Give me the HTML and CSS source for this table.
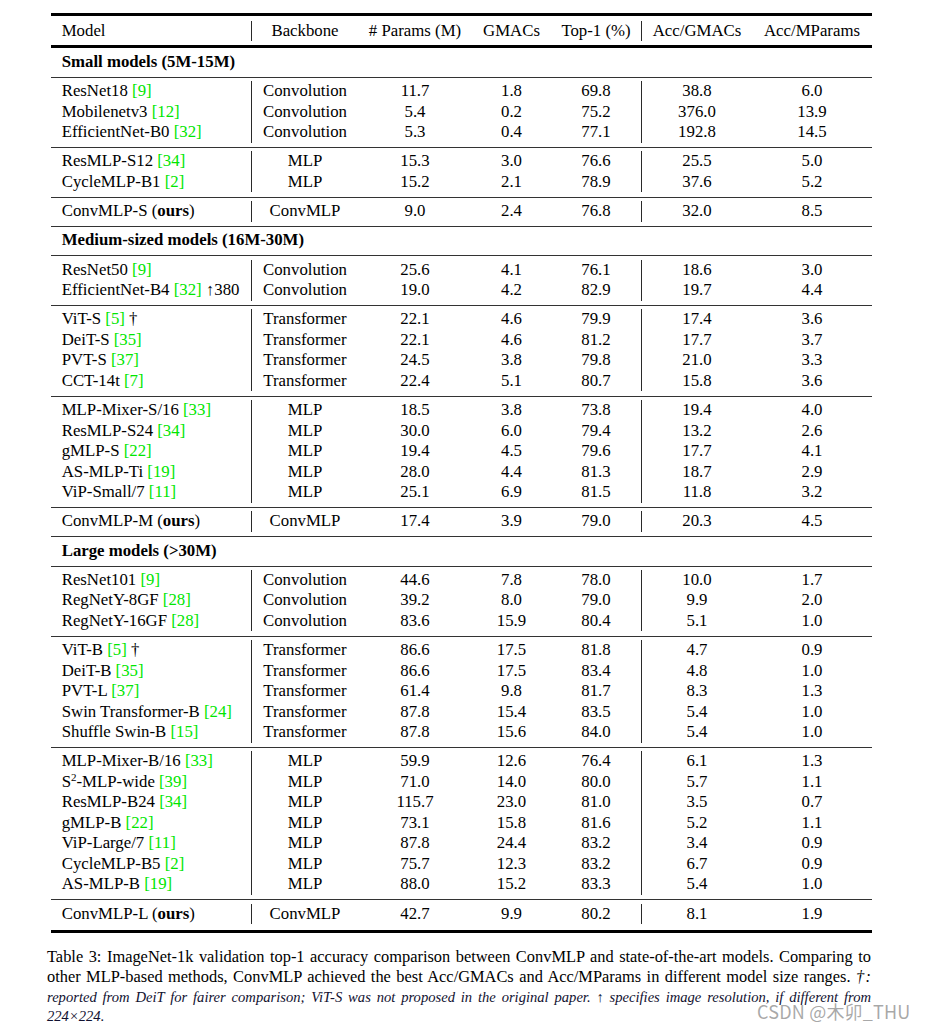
FILE: index.html
```html
<!DOCTYPE html>
<html>
<head>
<meta charset="utf-8">
<link rel="stylesheet" href="styles.css">
</head>
<body>
<div class="page">
  <div class="tbl">
    <div class="head row">
      <span class="m">Model</span><span>Backbone</span><span># Params (M)</span><span>GMACs</span><span class="t">Top-1 (%)</span><span>Acc/GMACs</span><span>Acc/MParams</span>
    </div>

    <div class="sec first">Small models (5M-15M)</div>
    <div class="grp">
      <div class="row"><span class="m">ResNet18 <a class="ref">[9]</a></span><span>Convolution</span><span>11.7</span><span>1.8</span><span class="t">69.8</span><span>38.8</span><span>6.0</span></div>
      <div class="row"><span class="m">Mobilenetv3 <a class="ref">[12]</a></span><span>Convolution</span><span>5.4</span><span>0.2</span><span class="t">75.2</span><span>376.0</span><span>13.9</span></div>
      <div class="row"><span class="m">EfficientNet-B0 <a class="ref">[32]</a></span><span>Convolution</span><span>5.3</span><span>0.4</span><span class="t">77.1</span><span>192.8</span><span>14.5</span></div>
    </div>
    <div class="grp">
      <div class="row"><span class="m">ResMLP-S12 <a class="ref">[34]</a></span><span>MLP</span><span>15.3</span><span>3.0</span><span class="t">76.6</span><span>25.5</span><span>5.0</span></div>
      <div class="row"><span class="m">CycleMLP-B1 <a class="ref">[2]</a></span><span>MLP</span><span>15.2</span><span>2.1</span><span class="t">78.9</span><span>37.6</span><span>5.2</span></div>
    </div>
    <div class="grp">
      <div class="row"><span class="m">ConvMLP-S (<b>ours</b>)</span><span>ConvMLP</span><span>9.0</span><span>2.4</span><span class="t">76.8</span><span>32.0</span><span>8.5</span></div>
    </div>

    <div class="sec">Medium-sized models (16M-30M)</div>
    <div class="grp">
      <div class="row"><span class="m">ResNet50 <a class="ref">[9]</a></span><span>Convolution</span><span>25.6</span><span>4.1</span><span class="t">76.1</span><span>18.6</span><span>3.0</span></div>
      <div class="row"><span class="m">EfficientNet-B4 <a class="ref">[32]</a> ↑380</span><span>Convolution</span><span>19.0</span><span>4.2</span><span class="t">82.9</span><span>19.7</span><span>4.4</span></div>
    </div>
    <div class="grp">
      <div class="row"><span class="m">ViT-S <a class="ref">[5]</a> †</span><span>Transformer</span><span>22.1</span><span>4.6</span><span class="t">79.9</span><span>17.4</span><span>3.6</span></div>
      <div class="row"><span class="m">DeiT-S <a class="ref">[35]</a></span><span>Transformer</span><span>22.1</span><span>4.6</span><span class="t">81.2</span><span>17.7</span><span>3.7</span></div>
      <div class="row"><span class="m">PVT-S <a class="ref">[37]</a></span><span>Transformer</span><span>24.5</span><span>3.8</span><span class="t">79.8</span><span>21.0</span><span>3.3</span></div>
      <div class="row"><span class="m">CCT-14t <a class="ref">[7]</a></span><span>Transformer</span><span>22.4</span><span>5.1</span><span class="t">80.7</span><span>15.8</span><span>3.6</span></div>
    </div>
    <div class="grp">
      <div class="row"><span class="m">MLP-Mixer-S/16 <a class="ref">[33]</a></span><span>MLP</span><span>18.5</span><span>3.8</span><span class="t">73.8</span><span>19.4</span><span>4.0</span></div>
      <div class="row"><span class="m">ResMLP-S24 <a class="ref">[34]</a></span><span>MLP</span><span>30.0</span><span>6.0</span><span class="t">79.4</span><span>13.2</span><span>2.6</span></div>
      <div class="row"><span class="m">gMLP-S <a class="ref">[22]</a></span><span>MLP</span><span>19.4</span><span>4.5</span><span class="t">79.6</span><span>17.7</span><span>4.1</span></div>
      <div class="row"><span class="m">AS-MLP-Ti <a class="ref">[19]</a></span><span>MLP</span><span>28.0</span><span>4.4</span><span class="t">81.3</span><span>18.7</span><span>2.9</span></div>
      <div class="row"><span class="m">ViP-Small/7 <a class="ref">[11]</a></span><span>MLP</span><span>25.1</span><span>6.9</span><span class="t">81.5</span><span>11.8</span><span>3.2</span></div>
    </div>
    <div class="grp">
      <div class="row"><span class="m">ConvMLP-M (<b>ours</b>)</span><span>ConvMLP</span><span>17.4</span><span>3.9</span><span class="t">79.0</span><span>20.3</span><span>4.5</span></div>
    </div>

    <div class="sec">Large models (&gt;30M)</div>
    <div class="grp">
      <div class="row"><span class="m">ResNet101 <a class="ref">[9]</a></span><span>Convolution</span><span>44.6</span><span>7.8</span><span class="t">78.0</span><span>10.0</span><span>1.7</span></div>
      <div class="row"><span class="m">RegNetY-8GF <a class="ref">[28]</a></span><span>Convolution</span><span>39.2</span><span>8.0</span><span class="t">79.0</span><span>9.9</span><span>2.0</span></div>
      <div class="row"><span class="m">RegNetY-16GF <a class="ref">[28]</a></span><span>Convolution</span><span>83.6</span><span>15.9</span><span class="t">80.4</span><span>5.1</span><span>1.0</span></div>
    </div>
    <div class="grp">
      <div class="row"><span class="m">ViT-B <a class="ref">[5]</a> †</span><span>Transformer</span><span>86.6</span><span>17.5</span><span class="t">81.8</span><span>4.7</span><span>0.9</span></div>
      <div class="row"><span class="m">DeiT-B <a class="ref">[35]</a></span><span>Transformer</span><span>86.6</span><span>17.5</span><span class="t">83.4</span><span>4.8</span><span>1.0</span></div>
      <div class="row"><span class="m">PVT-L <a class="ref">[37]</a></span><span>Transformer</span><span>61.4</span><span>9.8</span><span class="t">81.7</span><span>8.3</span><span>1.3</span></div>
      <div class="row"><span class="m">Swin Transformer-B <a class="ref">[24]</a></span><span>Transformer</span><span>87.8</span><span>15.4</span><span class="t">83.5</span><span>5.4</span><span>1.0</span></div>
      <div class="row"><span class="m">Shuffle Swin-B <a class="ref">[15]</a></span><span>Transformer</span><span>87.8</span><span>15.6</span><span class="t">84.0</span><span>5.4</span><span>1.0</span></div>
    </div>
    <div class="grp">
      <div class="row"><span class="m">MLP-Mixer-B/16 <a class="ref">[33]</a></span><span>MLP</span><span>59.9</span><span>12.6</span><span class="t">76.4</span><span>6.1</span><span>1.3</span></div>
      <div class="row"><span class="m">S<sup>2</sup>-MLP-wide <a class="ref">[39]</a></span><span>MLP</span><span>71.0</span><span>14.0</span><span class="t">80.0</span><span>5.7</span><span>1.1</span></div>
      <div class="row"><span class="m">ResMLP-B24 <a class="ref">[34]</a></span><span>MLP</span><span>115.7</span><span>23.0</span><span class="t">81.0</span><span>3.5</span><span>0.7</span></div>
      <div class="row"><span class="m">gMLP-B <a class="ref">[22]</a></span><span>MLP</span><span>73.1</span><span>15.8</span><span class="t">81.6</span><span>5.2</span><span>1.1</span></div>
      <div class="row"><span class="m">ViP-Large/7 <a class="ref">[11]</a></span><span>MLP</span><span>87.8</span><span>24.4</span><span class="t">83.2</span><span>3.4</span><span>0.9</span></div>
      <div class="row"><span class="m">CycleMLP-B5 <a class="ref">[2]</a></span><span>MLP</span><span>75.7</span><span>12.3</span><span class="t">83.2</span><span>6.7</span><span>0.9</span></div>
      <div class="row"><span class="m">AS-MLP-B <a class="ref">[19]</a></span><span>MLP</span><span>88.0</span><span>15.2</span><span class="t">83.3</span><span>5.4</span><span>1.0</span></div>
    </div>
    <div class="grp">
      <div class="row"><span class="m">ConvMLP-L (<b>ours</b>)</span><span>ConvMLP</span><span>42.7</span><span>9.9</span><span class="t">80.2</span><span>8.1</span><span>1.9</span></div>
    </div>
  </div>

  <div class="cap">
    <div class="ln">Table 3: ImageNet-1k validation top-1 accuracy comparison between ConvMLP and state-of-the-art models. Comparing to</div>
    <div class="ln">other MLP-based methods, ConvMLP achieved the best Acc/GMACs and Acc/MParams in different model size ranges. <i>†:</i></div>
    <div class="ln it">reported from DeiT for fairer comparison; ViT-S was not proposed in the original paper. ↑ specifies image resolution, if different from</div>
    <div class="it last">224×224.</div>
  </div>

  <div class="wm">CSDN @木卯_THU</div>
</div>
</body>
</html>
```

FILE: styles.css
```css
html, body {
  margin: 0;
  padding: 0;
  background: #ffffff;
}

body {
  font-family: "Liberation Serif", "Times New Roman", serif;
  color: #000000;
}

.page {
  position: relative;
  width: 929px;
  height: 1031px;
  overflow: hidden;
}

.tbl {
  margin: 13px 0 0 51px;
  width: 821px;
  border-top: 3px solid #000;
  border-bottom: 3px solid #000;
  font-size: 16.8px;
}

.row {
  display: grid;
  grid-template-columns: 201px 106px 114px 79px 91px 110px 120px;
  height: 20.5px;
  line-height: 20.5px;
}

.row > span {
  text-align: center;
  white-space: nowrap;
}

.row > .m {
  text-align: left;
  padding-left: 10.7px;
  border-right: 1px solid #2a2a2a;
}

.row > .t {
  border-right: 1px solid #2a2a2a;
}

.head {
  box-sizing: content-box;
  padding: 4.5px 0 3.5px;
  border-bottom: 3px solid #000;
}

.sec {
  padding: 3.25px 0 4.5px 10.7px;
  line-height: 20.5px;
  height: 20.5px;
  font-weight: bold;
  border-bottom: 1px solid #333;
}

.sec.first {
  padding-top: 4.25px;
}

.grp {
  padding: 3.25px 0 4.5px;
}

.grp + .grp,
.grp + .sec {
  border-top: 1px solid #333;
}

.grp:last-child {
  padding-bottom: 5.5px;
}

.ref {
  color: #00e600;
  text-decoration: none;
}

sup {
  font-size: 11px;
  line-height: 0;
  vertical-align: 6px;
}

.cap {
  margin: 14px 0 0 47px;
  width: 824px;
  font-size: 16.4px;
  line-height: 20.3px;
}

.cap .ln {
  text-align: justify;
  text-align-last: justify;
  white-space: nowrap;
}

.cap .it {
  font-style: italic;
  font-size: 14.6px;
  color: #111130;
}

.cap .last {
  line-height: 19.5px;
}

.wm {
  position: absolute;
  left: 757px;
  top: 1000px;
  font-family: "Noto Sans CJK SC", "Noto Sans", sans-serif;
  font-size: 18px;
  line-height: 22px;
  color: rgba(140, 140, 140, 0.75);
  letter-spacing: 0.2px;
}
```
